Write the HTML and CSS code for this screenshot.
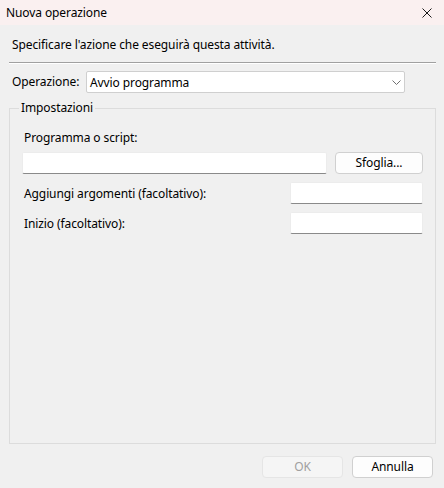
FILE: index.html
```html
<!DOCTYPE html>
<html lang="it">
<head>
<meta charset="utf-8">
<title>Nuova operazione</title>
<link rel="stylesheet" href="styles.css">
</head>
<body>
<div class="window">
  <div class="titlebar">
    <span class="title">Nuova operazione</span>
    <svg class="close" width="10" height="10" viewBox="0 0 10 10"><path d="M0.5 0.5 L9.5 9.5 M9.5 0.5 L0.5 9.5" stroke="#1a1a1a" stroke-width="1" fill="none"/></svg>
  </div>
  <div class="content">
    <div class="intro">Specificare l'azione che eseguirà questa attività.</div>
    <div class="sep"></div>
    <div class="op-row">
      <span class="op-label">Operazione:</span>
      <div class="combo">
        <span class="combo-text">Avvio programma</span>
        <svg class="chev" width="9" height="5" viewBox="0 0 9 5"><path d="M0.5 0.5 L4.5 4.5 L8.5 0.5" stroke="#707070" stroke-width="1" fill="none"/></svg>
      </div>
    </div>
    <div class="group">
      <span class="legend">Impostazioni</span>
      <div class="field-label">Programma o script:</div>
      <div class="prog-row">
        <div class="input prog-input"></div>
        <div class="btn browse">Sfoglia...</div>
      </div>
      <div class="arg-row">
        <span class="arg-label">Aggiungi argomenti (facoltativo):</span>
        <div class="input small-input"></div>
      </div>
      <div class="arg-row">
        <span class="arg-label">Inizio (facoltativo):</span>
        <div class="input small-input"></div>
      </div>
    </div>
    <div class="footer">
      <div class="btn disabled">OK</div>
      <div class="btn">Annulla</div>
    </div>
  </div>
</div>
</body>
</html>
```
FILE: styles.css
```css
html, body {
  margin: 0;
  padding: 0;
}
body {
  width: 444px;
  height: 488px;
  background: #f0f0f0;
  font-family: "Segoe UI", "Noto Sans", sans-serif;
  font-size: 12px;
  letter-spacing: -0.1px;
  color: #000;
  overflow: hidden;
}
.window {
  display: flex;
  flex-direction: column;
  height: 488px;
}
.titlebar {
  height: 25px;
  background: #faf0f0;
  display: flex;
  align-items: center;
  justify-content: space-between;
  padding: 0 12px 0 6px;
  line-height: 16px;
}
.close {
  display: block;
}
.content {
  display: flex;
  flex-direction: column;
  padding: 0 8px 0 9px;
  flex: 1;
}
.intro {
  margin-top: 12px;
  padding-left: 3px;
  line-height: 16px;
}
.sep {
  margin-top: 9px;
  height: 0;
  border-top: 1px solid #a0a0a0;
  border-bottom: 1px solid #ffffff;
}
.op-row {
  margin-top: 7px;
  display: flex;
  align-items: center;
  height: 22px;
  padding-left: 3px;
}
.op-label {
  width: 74px;
  line-height: 16px;
}
.combo {
  width: 319px;
  height: 22px;
  box-sizing: border-box;
  background: #fff;
  border: 1px solid #cfcfcf;
  border-radius: 2px;
  display: flex;
  align-items: center;
  justify-content: space-between;
  padding: 0 3px 0 3px;
}
.chev {
  display: block;
}
.group {
  margin-top: 15px;
  height: 336px;
  box-sizing: border-box;
  border: 1px solid #dcdcdc;
  padding: 0 12px;
  display: flex;
  flex-direction: column;
}
.legend {
  align-self: flex-start;
  margin-top: -9px;
  margin-left: -3px;
  padding: 0 2px 0 2px;
  background: #f0f0f0;
  line-height: 16px;
}
.field-label {
  margin-top: 14px;
  padding-left: 2px;
  line-height: 16px;
}
.prog-row {
  margin-top: 6px;
  display: flex;
  justify-content: space-between;
}
.input {
  height: 22px;
  box-sizing: border-box;
  background: #fff;
  border: 1px solid #ececec;
  border-bottom: 1px solid #8a8a8a;
  border-radius: 2px;
}
.prog-input {
  width: 305px;
}
.btn {
  height: 22px;
  box-sizing: border-box;
  background: #fdfdfd;
  border: 1px solid #d0d0d0;
  border-radius: 4px;
  display: flex;
  align-items: center;
  justify-content: center;
  line-height: 16px;
}
.browse {
  width: 88px;
}
.arg-row {
  margin-top: 8px;
  display: flex;
  align-items: center;
  justify-content: space-between;
  padding-left: 2px;
}
.small-input {
  width: 133px;
}
.footer {
  margin-top: 12px;
  display: flex;
  justify-content: flex-end;
  gap: 9px;
  padding-right: 3px;
}
.footer .btn {
  width: 81px;
}
.btn.disabled {
  background: #f5f5f5;
  border-color: #e5e5e5;
  color: #a0a0a0;
}
```
